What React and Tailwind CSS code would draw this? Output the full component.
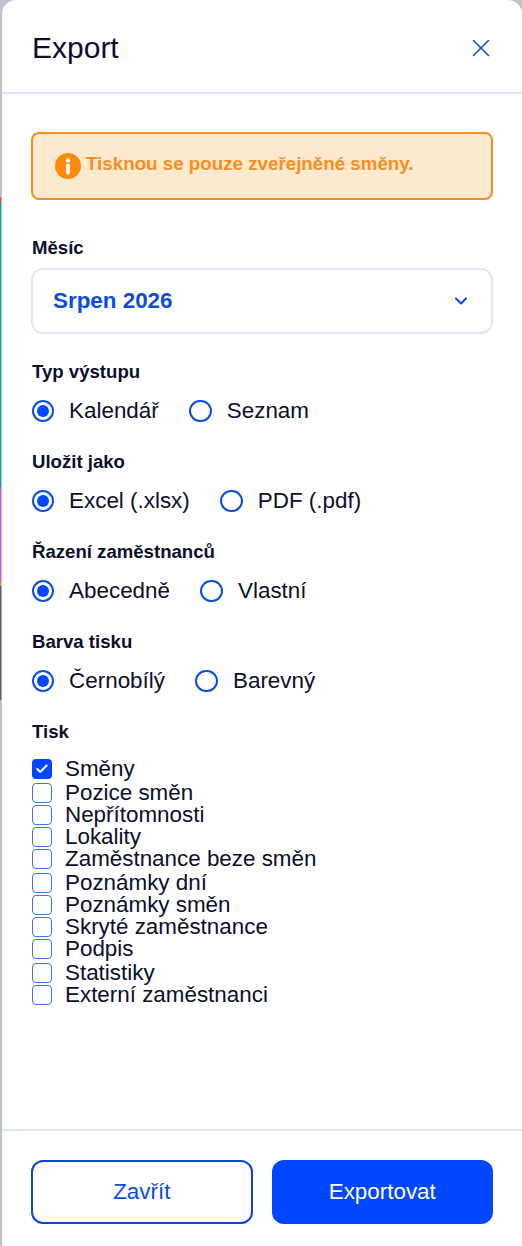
import { ChevronDown, X, Check } from 'lucide-react'

const radioGroups = [
  { label: 'Typ výstupu', options: ['Kalendář', 'Seznam'] },
  { label: 'Uložit jako', options: ['Excel (.xlsx)', 'PDF (.pdf)'] },
  { label: 'Řazení zaměstnanců', options: ['Abecedně', 'Vlastní'] },
  { label: 'Barva tisku', options: ['Černobílý', 'Barevný'] },
]

const printOptions = [
  'Směny',
  'Pozice směn',
  'Nepřítomnosti',
  'Lokality',
  'Zaměstnance beze směn',
  'Poznámky dní',
  'Poznámky směn',
  'Skryté zaměstnance',
  'Podpis',
  'Statistiky',
  'Externí zaměstnanci',
]

function Radio({ label, checked }) {
  return (
    <label className="flex items-center gap-[15px]">
      <span className="flex h-[22.6px] w-[22.6px] items-center justify-center rounded-full border-2 border-[#0a4de0]">
        {checked && <span className="h-3 w-3 rounded-full bg-[#0047ff]" />}
      </span>
      <span className="text-[22.4px] leading-[24px]">{label}</span>
    </label>
  )
}

function RadioGroup({ label, options }) {
  return (
    <div className="h-[90px]">
      <div className="pl-px text-[18.6px] leading-[20px] font-bold">{label}</div>
      <div className="mt-[14px] flex h-[30px] items-center gap-[30.5px] pl-[0.5px]">
        {options.map((option, i) => (
          <Radio key={option} label={option} checked={i === 0} />
        ))}
      </div>
    </div>
  )
}

function PrintOption({ label, checked, spaced }) {
  return (
    <label className={`flex h-[22px] items-center gap-[13px] ${spaced ? 'mt-[2px]' : ''}`}>
      {checked ? (
        <span className="flex h-5 w-5 items-center justify-center rounded bg-[#0047ff] text-white">
          <Check size={14} strokeWidth={3.5} />
        </span>
      ) : (
        <span className="h-5 w-5 rounded border-[1.5px] border-[#3b74e6]" />
      )}
      <span className="text-[22.4px] leading-[22px]">{label}</span>
    </label>
  )
}

function BackdropStrip() {
  return (
    <div className="flex w-[2px] shrink-0 flex-col">
      <div className="h-[197px]" />
      <div className="h-[6px] border-r border-white/50 bg-[#d8505a]" />
      <div className="h-[284px] border-r border-white/50 bg-[#1f9e94]" />
      <div className="h-[96px] border-r border-white/50 bg-[#c65cc0]" />
      <div className="h-[3px] border-r border-white/50 bg-[#e8922e]" />
      <div className="h-[114px] border-r border-white/50 bg-[#5c5866]" />
    </div>
  )
}

export default function App() {
  return (
    <div className="flex h-[1246px] w-[522px] overflow-hidden bg-[#bcc0cf] font-['Liberation_Sans',Arial,sans-serif] text-[#0a0f2c]">
      <BackdropStrip />

      <div className="flex min-w-0 flex-1 flex-col rounded-t-[14px] bg-white">
        {/* Header */}
        <div className="flex h-[94px] shrink-0 items-center justify-between border-b-2 border-[#dbe4f8] pt-[3px] pr-[26px] pl-[30px]">
          <h2 className="text-[30px] leading-[36px]">Export</h2>
          <X size={30} strokeWidth={1.3} className="text-[#0a4de0]" />
        </div>

        {/* Body */}
        <div className="flex-1 pt-[38px] pr-[29px] pl-[29px]">
          <div className="flex h-[68px] items-center gap-[5px] rounded-lg border-2 border-[#f78f1e] bg-[#fde8d0] pb-[4px] pl-[22px] text-[18.75px] font-bold text-[#f78f1e]">
            <svg width="26" height="26" viewBox="0 0 26 26" className="mt-1 shrink-0">
              <circle cx="13" cy="13" r="13" fill="#fb8c0a" />
              <circle cx="13" cy="7.5" r="2.2" fill="#fff" />
              <rect x="11.2" y="10.8" width="3.6" height="10.6" rx="1.4" fill="#fff" />
            </svg>
            Tisknou se pouze zveřejněné směny.
          </div>

          <div className="mt-[38px] pl-px text-[18.6px] leading-[20px] font-bold">Měsíc</div>
          <div className="mt-[10px] mb-[28px] flex h-[66px] items-center justify-between rounded-xl border-2 border-[#dfe7fb] pr-[20px] pl-[20px]">
            <span className="text-[22.4px] font-bold text-[#0a4de0]">Srpen 2026</span>
            <ChevronDown size={20} strokeWidth={2.5} className="text-[#0a4de0]" />
          </div>

          {radioGroups.map((group) => (
            <RadioGroup key={group.label} {...group} />
          ))}

          <div className="pl-px text-[18.6px] leading-[20px] font-bold">Tisk</div>
          <div className="mt-[16px] pl-px">
            {printOptions.map((option, i) => (
              <PrintOption key={option} label={option} checked={i === 0} spaced={i % 4 === 1} />
            ))}
          </div>
        </div>

        {/* Footer */}
        <div className="grid h-[117px] shrink-0 grid-cols-2 gap-[19px] border-t-2 border-[#dbe4f8] pt-[29px] pr-[29px] pl-[29px]">
          <button className="h-[64px] rounded-xl border-2 border-[#0a47d8] bg-white text-[22.4px] text-[#0a4de0]">
            Zavřít
          </button>
          <button className="h-[64px] rounded-xl bg-[#0047ff] text-[22.4px] text-white">
            Exportovat
          </button>
        </div>
      </div>
    </div>
  )
}
